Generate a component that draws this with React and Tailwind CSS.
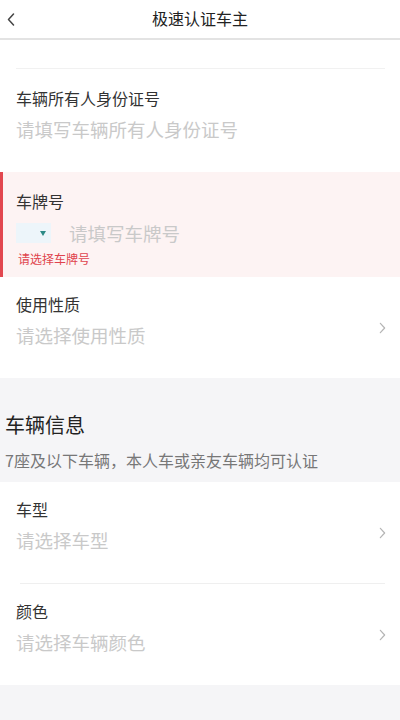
import React from 'react'

const font = { fontFamily: '"Noto Sans CJK SC", "Noto Sans", sans-serif' }

const Chevron = ({ className }) => (
  <svg className={className} viewBox="0 0 8 14" fill="none" stroke="currentColor" strokeWidth="1.4" strokeLinecap="round" strokeLinejoin="round">
    <path d="M1.5 1.5 L6.5 7 L1.5 12.5" />
  </svg>
)

const Field = ({ label, placeholder, arrow }) => (
  <div className="flex items-center pl-4 pr-[14px] pt-[16px] pb-[30px]">
    <div className="flex-1">
      <div className="text-[16px] leading-[22px] text-[#333]">{label}</div>
      <div className="mt-[7px] text-[18.5px] leading-[26px] text-[#c9c9c9]">{placeholder}</div>
    </div>
    {arrow && <Chevron className="w-[7px] h-[12px] text-[#b5b5b5] mt-[14px]" />}
  </div>
)

const App = () => {
  return (
    <div className="min-h-screen bg-[#f5f5f7]" style={font}>
      {/* Header */}
      <div className="relative h-[40px] bg-white border-b-2 border-[#e3e3e3] flex items-center justify-center">
        <svg className="absolute left-[7px] top-[13px] w-[8px] h-[13px] text-[#444]" viewBox="0 0 8 13" fill="none" stroke="currentColor" strokeWidth="1.5" strokeLinecap="round" strokeLinejoin="round">
          <path d="M6.5 1 L1.5 6.5 L6.5 12" />
        </svg>
        <span className="text-[16px] text-[#222] -mt-[2px]">极速认证车主</span>
      </div>

      {/* Owner ID */}
      <div className="bg-white">
        <div className="h-[28px]" />
        <div className="ml-4 mr-[15px] h-px bg-[#f1f1f1]" />
        <div className="pl-4 pt-[18px] pb-[30px]">
          <div className="text-[16px] leading-[22px] text-[#333]">车辆所有人身份证号</div>
          <div className="mt-[7px] text-[18.5px] leading-[26px] text-[#c9c9c9]">请填写车辆所有人身份证号</div>
        </div>

        {/* Plate number (error state) */}
        <div className="bg-[#fdf3f3] border-l-[3px] border-[#e2474f] pl-[13px] pt-[18px] pb-[10px]">
          <div className="text-[16px] leading-[22px] text-[#333]">车牌号</div>
          <div className="mt-2 flex items-center h-[26px]">
            <div className="w-[35px] h-[20px] bg-[#edf5fa] flex items-center justify-end pr-[5px]">
              <div className="w-0 h-0 border-l-[3.5px] border-r-[3.5px] border-t-[5px] border-l-transparent border-r-transparent border-t-[#2d8a86]" />
            </div>
            <span className="ml-[18px] text-[18.5px] leading-[26px] text-[#c9c9c9]">请填写车牌号</span>
          </div>
          <div className="mt-[5px] text-[12px] leading-[16px] text-[#e0434d] ml-[2px]">请选择车牌号</div>
        </div>

        <Field label="使用性质" placeholder="请选择使用性质" arrow />
      </div>

      {/* Vehicle info heading */}
      <div className="pl-[5px] pt-[33px] pb-[12px]">
        <div className="text-[20px] leading-[28px] text-[#222]">车辆信息</div>
        <div className="mt-[11px] text-[16px] leading-[20px] text-[#777]">7座及以下车辆，本人车或亲友车辆均可认证</div>
      </div>

      <div className="bg-white">
        <Field label="车型" placeholder="请选择车型" arrow />
        <div className="ml-5 mr-[15px] h-px bg-[#efefef]" />
        <Field label="颜色" placeholder="请选择车辆颜色" arrow />
      </div>
    </div>
  )
}

export default App
